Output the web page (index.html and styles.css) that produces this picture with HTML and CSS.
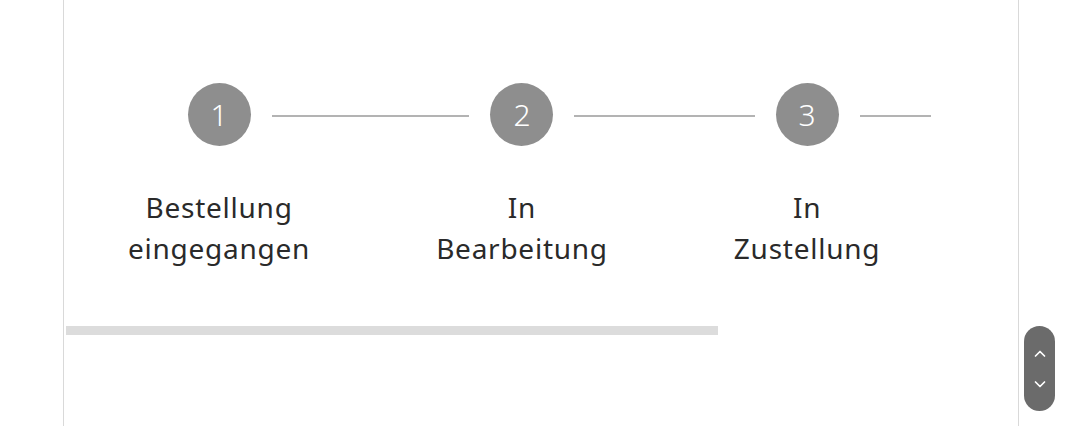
FILE: index.html
```html
<!DOCTYPE html>
<html lang="de">
<head>
<meta charset="utf-8">
<title>Bestellstatus</title>
<link rel="stylesheet" href="styles.css">
</head>
<body>
<main class="page">
  <div class="scroller">
    <ol class="steps">
      <li class="step">
        <span class="circle">1</span>
        <span class="connector" style="width:197px"></span>
        <span class="label">Bestellung<br>eingegangen</span>
      </li>
      <li class="step">
        <span class="circle">2</span>
        <span class="connector" style="width:181px"></span>
        <span class="label">In<br>Bearbeitung</span>
      </li>
      <li class="step">
        <span class="circle">3</span>
        <span class="connector" style="width:71px"></span>
        <span class="label">In<br>Zustellung</span>
      </li>
    </ol>
  </div>
  <div class="scrollbar">
    <div class="thumb" style="width:652px"></div>
  </div>
</main>
<div class="scroll-nav">
  <button class="nav-btn" aria-label="Nach oben">
    <svg width="14" height="10" viewBox="0 0 14 10"><path d="M2.5 7 L7 2.5 L11.5 7" fill="none" stroke="#fff" stroke-width="1.7" stroke-linecap="round" stroke-linejoin="round"/></svg>
  </button>
  <button class="nav-btn" aria-label="Nach unten">
    <svg width="14" height="10" viewBox="0 0 14 10"><path d="M2.5 3 L7 7.5 L11.5 3" fill="none" stroke="#fff" stroke-width="1.7" stroke-linecap="round" stroke-linejoin="round"/></svg>
  </button>
</div>
</body>
</html>
```

FILE: styles.css
```css
html, body {
  margin: 0;
  padding: 0;
  background: #fff;
}
body {
  font-family: "Noto Sans", "Open Sans", sans-serif;
  color: #2a2a2a;
  overflow: hidden;
}
.page {
  box-sizing: border-box;
  width: 956px;
  height: 426px;
  margin-left: 63px;
  border-left: 1px solid #d9d9d9;
  border-right: 1px solid #d9d9d9;
  padding: 83px 0 0 1px;
}
.scroller {
  overflow: hidden;
}
.steps {
  list-style: none;
  margin: 0;
  padding: 0 0 57px 0;
  display: flex;
}
.step {
  position: relative;
  display: flex;
  flex-direction: column;
  align-items: center;
  padding: 0 63px;
  flex: none;
}
.circle {
  width: 63px;
  height: 63px;
  border-radius: 50%;
  background: #8e8e8e;
  color: #fff;
  font-size: 30px;
  font-weight: 300;
  display: flex;
  align-items: center;
  justify-content: center;
  line-height: 1;
}
.connector {
  position: absolute;
  top: 32px;
  left: calc(50% + 52.5px);
  height: 2px;
  background: #b3b3b3;
}
.label {
  margin-top: 41px;
  font-size: 28px;
  line-height: 41px;
  text-align: center;
  letter-spacing: 0.75px;
  white-space: nowrap;
}
.scrollbar {
  height: 9px;
  margin: 0 2px 0 1px;
}
.thumb {
  height: 100%;
  background: #dcdcdc;
}
.scroll-nav {
  position: fixed;
  right: 25px;
  bottom: 15px;
  width: 31px;
  height: 85px;
  border-radius: 16px;
  background: #6b6b6b;
  display: flex;
  flex-direction: column;
  justify-content: center;
  gap: 14px;
}
.nav-btn {
  border: 0;
  background: none;
  padding: 0;
  height: 16px;
  display: flex;
  align-items: center;
  justify-content: center;
  cursor: pointer;
}
```
